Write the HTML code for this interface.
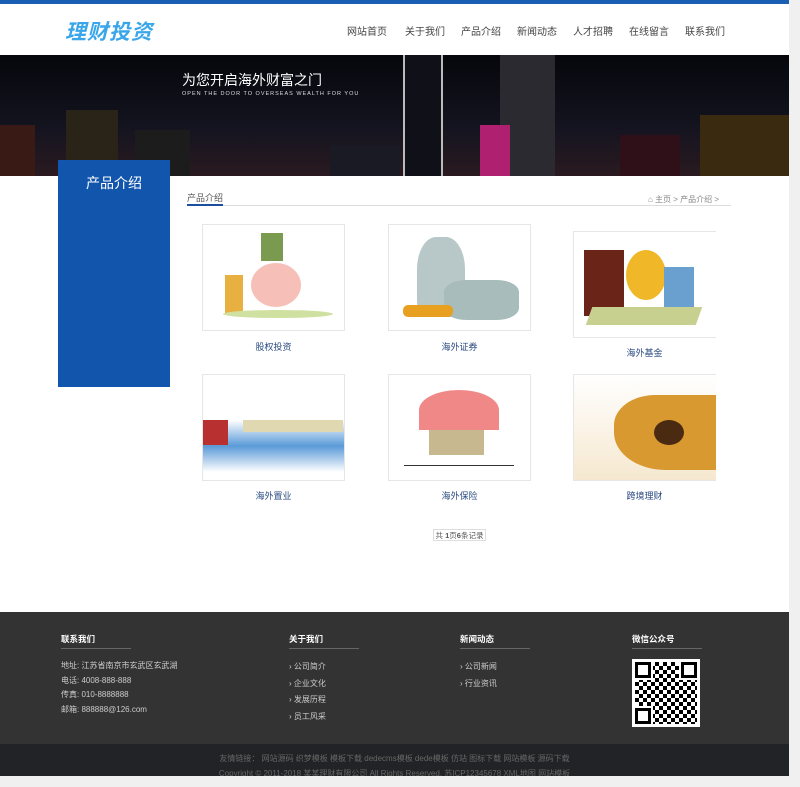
<!DOCTYPE html>
<html><head><meta charset="utf-8"><style>
*{margin:0;padding:0;box-sizing:border-box}
body{width:800px;height:787px;background:#f0f0f0;font-family:"Liberation Sans","Noto Sans CJK SC",sans-serif;position:relative;overflow:hidden}
.page{position:absolute;left:0;top:0;width:789px;height:776px;background:#fff}
.topbar{position:absolute;left:0;top:0;width:789px;height:4px;background:#1a5fb4}
.logo{position:absolute;left:65px;top:16px;font-size:21px;font-weight:bold;color:#3aa6ea;letter-spacing:1px;font-style:italic}
.nav{position:absolute;top:23px;font-size:10px;color:#444}
.banner{position:absolute;left:0;top:55px;width:789px;height:121px;background:linear-gradient(180deg,#06060c,#141420 60%,#2a1a20);overflow:hidden}
.bt{position:absolute;left:182px;top:15px;color:#fff;font-size:14px}
.bs{position:absolute;left:182px;top:36px;color:#ddd;font-size:5.5px;letter-spacing:1px}
.side{position:absolute;left:58px;top:160px;width:112px;height:227px;background:#1255ad;color:#fff;font-size:14px;text-align:center;padding-top:13px}
.crumb{position:absolute;left:187px;top:191px;font-size:9px;color:#555}
.line{position:absolute;left:187px;top:205px;width:544px;height:1px;background:#ddd}
.line2{position:absolute;left:187px;top:204px;width:36px;height:2px;background:#1a4fa0}
.bc{position:absolute;left:648px;top:194px;font-size:8px;color:#888}
.img{position:absolute;width:143px;height:107px;border:1px solid #e6e6e6;background:#fff;overflow:hidden}
.cap{position:absolute;width:143px;text-align:center;font-size:9px;color:#2a4a80}
.pg{position:absolute;left:433px;top:529px;width:53px;height:12px;border:1px solid #ddd;font-size:7.5px;color:#555;text-align:center;line-height:11px;white-space:nowrap;overflow:hidden}
.foot{position:absolute;left:0;top:612px;width:789px;height:132px;background:#333}
.fb{position:absolute;left:0;top:744px;width:789px;height:32px;background:#222326;color:#666;font-size:8px;text-align:center;overflow:hidden}
.fh{position:absolute;top:633px;font-size:8.5px;color:#fff;font-weight:bold}
.fl{position:absolute;top:648px;width:70px;height:1px;background:#666}
.ft{position:absolute;font-size:8px;color:#ccc;line-height:14.5px}
</style></head><body>
<div class="page">
<div class="topbar"></div>
<div class="logo">理财投资</div>
<div class="nav" style="left:347px">网站首页</div>
<div class="nav" style="left:405px">关于我们</div>
<div class="nav" style="left:461px">产品介绍</div>
<div class="nav" style="left:517px">新闻动态</div>
<div class="nav" style="left:573px">人才招聘</div>
<div class="nav" style="left:629px">在线留言</div>
<div class="nav" style="left:685px">联系我们</div>
<div class="banner">
 <div style="position:absolute;left:66px;top:55px;width:52px;height:66px;background:#2a2418"></div>
 <div style="position:absolute;left:0;top:70px;width:35px;height:51px;background:#3a1a14"></div>
 <div style="position:absolute;left:135px;top:75px;width:55px;height:46px;background:#1c1c1c"></div>
 <div style="position:absolute;left:403px;top:0;width:40px;height:121px;border-left:2px solid #bbb;border-right:2px solid #bbb;background:#101018"></div>
 <div style="position:absolute;left:500px;top:0;width:55px;height:121px;background:#2a2a30"></div>
 <div style="position:absolute;left:480px;top:70px;width:30px;height:51px;background:#b02070"></div>
 <div style="position:absolute;left:620px;top:80px;width:60px;height:41px;background:#301018"></div>
 <div style="position:absolute;left:700px;top:60px;width:89px;height:61px;background:#3a2a10"></div>
 <div style="position:absolute;left:330px;top:90px;width:70px;height:31px;background:#1a1a24"></div>
 <div class="bt">为您开启海外财富之门</div>
 <div class="bs">OPEN THE DOOR TO OVERSEAS WEALTH FOR YOU</div>
</div>
<div class="side">产品介绍</div>
<div class="crumb">产品介绍</div>
<div class="line"></div><div class="line2"></div>
<div class="bc">⌂ 主页 &gt; 产品介绍 &gt;</div>

<div class="img" style="left:202px;top:224px"><div style="position:absolute;left:48px;top:38px;width:50px;height:44px;border-radius:50%;background:#f6c0b8"></div><div style="position:absolute;left:22px;top:50px;width:18px;height:40px;background:#e8b040"></div><div style="position:absolute;left:58px;top:8px;width:22px;height:28px;background:#7a9a50"></div><div style="position:absolute;left:20px;top:85px;width:110px;height:8px;border-radius:50%;background:#cfe0a0"></div></div>
<div class="cap" style="left:202px;top:340px">股权投资</div>
<div class="img" style="left:388px;top:224px"><div style="position:absolute;left:28px;top:12px;width:48px;height:80px;border-radius:40% 40% 20% 20%;background:#b8c8c8"></div><div style="position:absolute;left:55px;top:55px;width:75px;height:40px;border-radius:30%;background:#a8bcbc"></div><div style="position:absolute;left:14px;top:80px;width:50px;height:12px;background:#e8a020;border-radius:5px"></div></div>
<div class="cap" style="left:388px;top:340px">海外证券</div>
<div class="img" style="left:573px;top:231px;border-right:none"><div style="position:absolute;left:10px;top:18px;width:40px;height:66px;background:#6a2418"></div><div style="position:absolute;left:52px;top:18px;width:40px;height:50px;border-radius:50%;background:#f0b828"></div><div style="position:absolute;left:90px;top:35px;width:30px;height:45px;background:#6aa0d0"></div><div style="position:absolute;left:15px;top:75px;width:110px;height:18px;background:#c8d090;transform:skewX(-20deg)"></div></div>
<div class="cap" style="left:573px;top:346px">海外基金</div>

<div class="img" style="left:202px;top:374px"><div style="position:absolute;left:0;top:45px;width:143px;height:52px;background:linear-gradient(#fff,#5a9ad8 50%,#fff)"></div><div style="position:absolute;left:0;top:45px;width:25px;height:25px;background:#b83030"></div><div style="position:absolute;left:40px;top:45px;width:100px;height:12px;background:#e0d8b0"></div></div>
<div class="cap" style="left:202px;top:489px">海外置业</div>
<div class="img" style="left:388px;top:374px"><div style="position:absolute;left:30px;top:15px;width:80px;height:40px;border-radius:50% 50% 0 0;background:#f08888"></div><div style="position:absolute;left:40px;top:55px;width:55px;height:25px;background:#c8b890"></div><div style="position:absolute;left:15px;top:90px;width:110px;height:1px;background:#333"></div></div>
<div class="cap" style="left:388px;top:489px">海外保险</div>
<div class="img" style="left:573px;top:374px;border-right:none;background:linear-gradient(#fff,#f6e8d0)"><div style="position:absolute;left:40px;top:20px;width:103px;height:75px;border-radius:40% 0 0 50%;background:#d89a30"></div><div style="position:absolute;left:80px;top:45px;width:30px;height:25px;border-radius:50%;background:#4a2a10"></div></div>
<div class="cap" style="left:573px;top:489px">跨境理财</div>

<div class="pg">共 <b>1</b>页<b>6</b>条记录</div>

<div class="foot"></div>
<div class="fh" style="left:61px">联系我们</div><div class="fl" style="left:61px"></div>
<div class="fh" style="left:289px">关于我们</div><div class="fl" style="left:289px"></div>
<div class="fh" style="left:460px">新闻动态</div><div class="fl" style="left:460px"></div>
<div class="fh" style="left:632px">微信公众号</div><div class="fl" style="left:632px"></div>
<div class="ft" style="left:61px;top:659px">地址: 江苏省南京市玄武区玄武湖<br>电话: 4008-888-888<br>传真: 010-8888888<br>邮箱: 888888@126.com</div>
<div class="ft" style="left:289px;top:659px;line-height:16.5px">› 公司简介<br>› 企业文化<br>› 发展历程<br>› 员工风采</div>
<div class="ft" style="left:460px;top:659px;line-height:16.5px">› 公司新闻<br>› 行业资讯</div>
<div style="position:absolute;left:632px;top:659px;width:68px;height:68px;background:#fff;padding:3px">
<div style="width:62px;height:62px;background:repeating-conic-gradient(#000 0 25%,#fff 0 50%) 0 0/8px 8px;position:relative">
<div style="position:absolute;left:0;top:0;width:16px;height:16px;border:3px solid #000;background:#fff;outline:2px solid #fff"></div>
<div style="position:absolute;right:0;top:0;width:16px;height:16px;border:3px solid #000;background:#fff;outline:2px solid #fff"></div>
<div style="position:absolute;left:0;bottom:0;width:16px;height:16px;border:3px solid #000;background:#fff;outline:2px solid #fff"></div>
</div></div>
<div class="fb"><div style="padding-top:9px">友情链接： 网站源码 织梦模板 模板下载 dedecms模板 dede模板 仿站 图标下载 网站模板 源码下载</div><div style="padding-top:4px">Copyright © 2011-2018 某某理财有限公司 All Rights Reserved. 苏ICP12345678 XML地图 网站模板</div></div>
</div>
</body></html>
